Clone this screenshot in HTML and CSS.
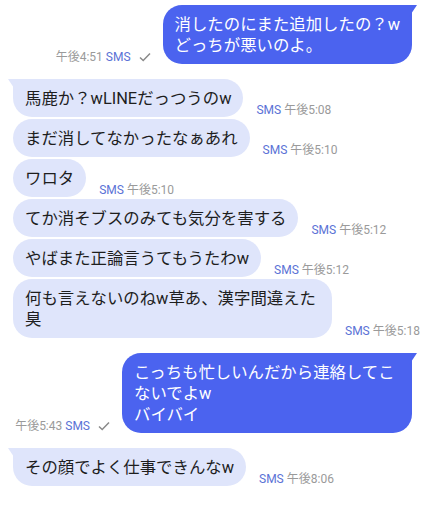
FILE: index.html
```html
<!DOCTYPE html>
<html>
    <head>
        <meta charset="utf-8">
        <link rel="stylesheet" href="styles.css">
    </head>
    <body>
        <div class="chat">
            <div class="row sent">
                <div class="meta">午後4:51 <span class="sms">SMS</span>
                    <svg class="check" width="12" height="10" viewBox="0 0 12 10"><polyline points="1,5.5 4.2,8.5 11,1.5" fill="none" stroke="#8a8a8a" stroke-width="1.5"/></svg>
                </div>
                <div class="bubble tail">消したのにまた追加したの？w<br>どっちが悪いのよ。</div>
            </div>

            <div class="group">
                <div class="row recv">
                    <div class="bubble tail">馬鹿か？wLINEだっつうのw</div>
                    <div class="meta"><span class="sms">SMS</span> 午後5:08</div>
                </div>
                <div class="row recv">
                    <div class="bubble">まだ消してなかったなぁあれ</div>
                    <div class="meta"><span class="sms">SMS</span> 午後5:10</div>
                </div>
                <div class="row recv">
                    <div class="bubble">ワロタ</div>
                    <div class="meta"><span class="sms">SMS</span> 午後5:10</div>
                </div>
                <div class="row recv">
                    <div class="bubble">てか消そブスのみても気分を害する</div>
                    <div class="meta"><span class="sms">SMS</span> 午後5:12</div>
                </div>
                <div class="row recv">
                    <div class="bubble">やばまた正論言うてもうたわw</div>
                    <div class="meta"><span class="sms">SMS</span> 午後5:12</div>
                </div>
                <div class="row recv">
                    <div class="bubble">何も言えないのねw草あ、漢字間違えた臭</div>
                    <div class="meta"><span class="sms">SMS</span> 午後5:18</div>
                </div>
            </div>

            <div class="row sent">
                <div class="meta">午後5:43 <span class="sms">SMS</span>
                    <svg class="check" width="12" height="10" viewBox="0 0 12 10"><polyline points="1,5.5 4.2,8.5 11,1.5" fill="none" stroke="#8a8a8a" stroke-width="1.5"/></svg>
                </div>
                <div class="bubble tail">こっちも忙しいんだから連絡してこないでよw<br>バイバイ</div>
            </div>

            <div class="row recv">
                <div class="bubble tail">その顔でよく仕事できんなw</div>
                <div class="meta"><span class="sms">SMS</span> 午後8:06</div>
            </div>
        </div>
    </body>
</html>
```

FILE: styles.css
```css
html,body {
    margin: 0;
    background-color: #FFFFFF;
    font-family: Roboto, "Noto Sans CJK JP", sans-serif;
    color: #1E1E1E;
}

.chat {
    display: flex;
    flex-direction: column;
    gap: 15px;
    padding-top: 5px;
}

.group {
    display: flex;
    flex-direction: column;
    gap: 2px;
}

.row {
    display: flex;
    align-items: flex-end;
}

.sent {
    justify-content: flex-end;
    gap: 12px;
    padding-right: 13px;
}

.recv {
    gap: 13px;
    padding-left: 13px;
}

.bubble {
    position: relative;
    box-sizing: border-box;
    font-size: 16.4px;
    line-height: 21px;
    padding: 8.5px 12px;
    border-radius: 19px;
}

.sent .bubble {
    background-color: #4B63EF;
    color: #FFFFFF;
    max-width: 290px;
}

.recv .bubble {
    background-color: #DFE5FB;
    max-width: 319px;
}

.sent .tail {
    border-top-right-radius: 0;
}

.recv .tail {
    border-top-left-radius: 0;
}

.tail::before {
    content: "";
    position: absolute;
    top: 0;
    width: 8px;
    height: 12px;
}

.sent .tail::before {
    right: -5px;
    background-color: #4B63EF;
    clip-path: polygon(0 0, 100% 0, 0 100%);
}

.recv .tail::before {
    left: -5px;
    background-color: #DFE5FB;
    clip-path: polygon(0 0, 100% 0, 100% 100%);
}

.meta {
    font-size: 12px;
    line-height: 14px;
    color: #9A9A9A;
    white-space: nowrap;
    display: flex;
    align-items: center;
    gap: 3px;
}

.sms {
    color: #5A72D6;
}

.check {
    margin-left: 5px;
}
```
